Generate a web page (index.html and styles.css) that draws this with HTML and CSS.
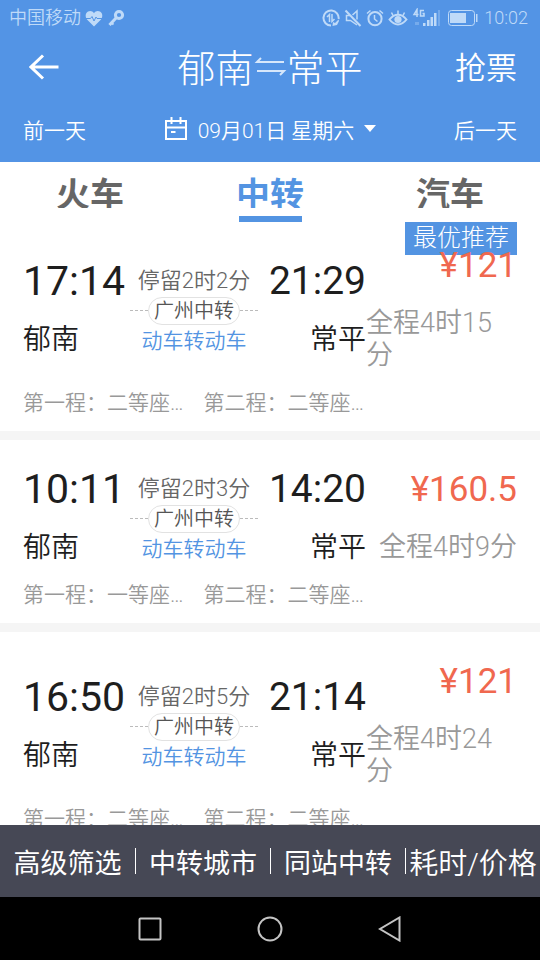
FILE: index.html
```html
<!DOCTYPE html>
<html lang="zh-CN">
<head>
<meta charset="utf-8">
<meta name="viewport" content="width=device-width, initial-scale=1">
<title>郁南 - 常平</title>
<link rel="stylesheet" href="styles.css">
</head>
<body>
<div class="app">
  <header class="header">
    <div class="status">
      <div class="status-group">
        <span>中国移动</span>
        <svg class="heart" width="18" height="17" viewBox="0 0 18 17"><path class="fill" d="M9 16.500 2 9.500C0 7 .3 3.200 3 1.600 5.300.4 7.800 1.300 9 3.300 10.200 1.300 12.700.4 15 1.600 17.700 3.200 18 7 16 9.500z"/><path class="cut" d="M1 8.500h4.500L7 6.500l2 4.500 2-4 1 1.500h5"/></svg>
        <svg class="key" width="18" height="18" viewBox="0 0 18 18"><circle class="ring" cx="12" cy="6" r="3.600"/><path class="ring" d="M9.500 8.500 2.500 16"/><path class="line" d="M4 13.500l2.500 2"/></svg>
      </div>
      <div class="status-group">
        <svg width="18" height="18" viewBox="0 0 18 18"><path class="line" d="M16.600 10A7.600 7.600 0 1 0 9 16.600"/><path class="mid" d="M7.500 13V5.500L5 8M10 5v7.500L12.500 10"/><path class="fill" d="M10.500 17 11 13l2 1 3.500-3.500.5 1.500-2 4z"/></svg>
        <svg width="18" height="18" viewBox="0 0 18 18"><path class="line" d="M1.500 1.500 16.500 17"/><path class="mid" d="M8.500 6 13 2v8.500M6 6.500H2.500v5h4L13 16"/></svg>
        <svg width="18" height="18" viewBox="0 0 18 18"><circle class="line" cx="9" cy="9.700" r="6.600"/><path class="mid" d="M8.500 6v4l3 2.500M1 4.500 4.500 1.500M17 4.500l-3.500-3"/></svg>
        <svg width="20" height="18" viewBox="0 0 20 18"><path class="line" d="M1.500 10.500c5-6.500 12-6.500 17 0-5 6.500-12 6.500-17 0z"/><path class="mid" d="M10 5V1.500M5 6.500 3.500 3.500M15 6.500l1.500-3"/><circle class="fill" cx="10" cy="10.500" r="3.600"/></svg>
        <svg class="signal" width="28" height="20" viewBox="0 0 28 20"><path class="mid" d="M5 9V1.500L2 6.500H6.500M12 2.500H8.500V8H12V5.500H10.500"/><path class="fill" d="M11 15h2.500v3H11zM15 12h2.500v6H15zM18.500 9H21v9h-2.500zM22 5h2.500v13H22z"/><path class="dim" d="M26 2h2v16h-2zM3 14h4v3H3z"/></svg>
        <svg class="battery" width="31" height="18" viewBox="0 0 31 18"><rect class="thin" x="1.500" y="1.500" width="26" height="15" rx="3"/><path class="fill" d="M3 4h16v10H3zM29 5h1.500v8H29z"/></svg>
        <span>10:02</span>
      </div>
    </div>
    <div class="titlebar">
      <button class="back" aria-label="返回"><svg width="30" height="26" viewBox="0 0 30 26"><path d="M14 1.500 2 13l12 11.500M2 13h27.500"/></svg></button>
      <h1 class="title"><span>郁南</span><svg width="33" height="20" viewBox="0 0 33 20"><path d="M7 1 3 5H30M3 14H30l-4 4"/></svg><span>常平</span></h1>
      <button class="grab">抢票</button>
    </div>
    <div class="datebar">
      <button class="day">前一天</button>
      <button class="date"><svg width="24" height="24" viewBox="0 0 24 24"><path d="M2 4h20v18H2zM2 10.500h20M7.500 0v7M16.500 0v7M7 15h4.500"/></svg><span>09月01日 星期六</span><i class="caret"></i></button>
      <button class="day next">后一天</button>
    </div>
  </header>
  <nav class="tabs">
    <a class="tab" href="#train"><span>火车</span></a>
    <a class="tab active" href="#transfer"><span>中转</span></a>
    <a class="tab" href="#bus"><span>汽车</span></a>
  </nav>
  <main class="list">
    <article class="card best">
      <span class="badge">最优推荐</span>
      <div class="trip">
        <div class="stop"><span class="time">17:14</span><span class="station">郁南</span></div>
        <div class="via"><span class="wait">停留2时2分</span><span class="hub"><span class="pill">广州中转</span></span><span class="kind">动车转动车</span></div>
        <div class="stop arrive"><span class="time">21:29</span><span class="station">常平</span></div>
        <div class="cost"><span class="price">¥121</span><span class="total">全程4时15分</span></div>
      </div>
      <div class="legs"><span>第一程：二等座…</span><span>第二程：二等座…</span></div>
    </article>
    <article class="card">
      <div class="trip">
        <div class="stop"><span class="time">10:11</span><span class="station">郁南</span></div>
        <div class="via"><span class="wait">停留2时3分</span><span class="hub"><span class="pill">广州中转</span></span><span class="kind">动车转动车</span></div>
        <div class="stop arrive"><span class="time">14:20</span><span class="station">常平</span></div>
        <div class="cost"><span class="price">¥160.5</span><span class="total">全程4时9分</span></div>
      </div>
      <div class="legs"><span>第一程：一等座…</span><span>第二程：二等座…</span></div>
    </article>
    <article class="card">
      <div class="trip">
        <div class="stop"><span class="time">16:50</span><span class="station">郁南</span></div>
        <div class="via"><span class="wait">停留2时5分</span><span class="hub"><span class="pill">广州中转</span></span><span class="kind">动车转动车</span></div>
        <div class="stop arrive"><span class="time">21:14</span><span class="station">常平</span></div>
        <div class="cost"><span class="price">¥121</span><span class="total">全程4时24分</span></div>
      </div>
      <div class="legs"><span>第一程：二等座…</span><span>第二程：二等座…</span></div>
    </article>
  </main>
  <footer class="filters">
    <button>高级筛选</button>
    <button>中转城市</button>
    <button>同站中转</button>
    <button class="sort">耗时/价格</button>
  </footer>
  <div class="sysnav">
    <button aria-label="最近任务"><svg width="26" height="26" viewBox="0 0 26 26"><rect x="2.500" y="2.500" width="21" height="21" rx="1"/></svg></button>
    <button aria-label="主页"><svg width="26" height="26" viewBox="0 0 26 26"><circle cx="13" cy="13" r="11.500"/></svg></button>
    <button aria-label="后退"><svg width="26" height="26" viewBox="0 0 26 26"><path d="M22.500 1.500v23L3 13z"/></svg></button>
  </div>
</div>
</body>
</html>
```
FILE: styles.css
```css
* {
  box-sizing: border-box;
}

body {
  margin: 0;
  font-family: Roboto, "Noto Sans CJK SC", sans-serif;
  font-weight: 350;
  color: #1e1e1e;
  background: #fff;
}

button {
  margin: 0;
  padding: 0;
  border: 0;
  background: none;
  color: inherit;
  font: inherit;
  white-space: nowrap;
}

svg {
  display: block;
  flex: none;
  fill: none;
}

.app {
  display: flex;
  flex-direction: column;
  height: 100vh;
}

/* Header */
.header {
  flex: none;
  color: #fff;
  background: #5394e5;
}

.status {
  display: flex;
  justify-content: space-between;
  padding: 0 12px 0 9px;
  line-height: 36px;
  font-size: 18px;
  color: #bfdaf8;
}

.status-group {
  display: flex;
  align-items: center;
  gap: 4px;
}

.status .line {
  stroke: currentColor;
  stroke-width: 2;
}

.status .mid {
  stroke: currentColor;
  stroke-width: 1.5;
}

.status .thin {
  stroke: currentColor;
  stroke-width: 1;
}

.status .ring {
  stroke: currentColor;
  stroke-width: 3;
}

.status .fill {
  fill: currentColor;
}

.status .cut {
  stroke: #5394e5;
  stroke-width: 1;
}

.status .dim {
  fill: #76abec;
}

.battery {
  margin: 0 2px 0 3px;
}

.titlebar,
.datebar {
  display: grid;
  grid-template-columns: 1fr auto 1fr;
  align-items: center;
  padding: 0 23px;
}

.titlebar {
  height: 62px;
}

.back {
  justify-self: start;
  padding-left: 6px;
}

.back svg {
  stroke: #fff;
  stroke-width: 3;
}

.title {
  display: flex;
  align-items: center;
  margin: 0;
  font-size: 38px;
  font-weight: 300;
}

.title span,
.grab {
  padding-bottom: 4px;
}

.title svg {
  stroke: #d6e7fb;
  stroke-width: 2;
}

.grab {
  justify-self: end;
  font-size: 31px;
}

.datebar {
  height: 64px;
  padding-bottom: 3px;
  font-size: 21px;
}

.day {
  justify-self: start;
}

.next {
  justify-self: end;
}

.date {
  display: flex;
  align-items: center;
  gap: 10px;
}

.date svg {
  stroke: #fff;
  stroke-width: 2;
}

.caret {
  border: 6px solid transparent;
  border-top: 7px solid #fff;
  border-bottom: 0;
}

/* Tabs */
.tabs {
  display: grid;
  grid-template-columns: repeat(3, 1fr);
  flex: none;
  height: 60px;
}

.tab {
  display: flex;
  flex-direction: column;
  align-items: center;
  gap: 8px;
  color: #666;
  font-size: 34px;
  font-weight: 700;
  text-decoration: none;
}

.tab span {
  height: 46px;
  line-height: 66px;
  overflow: hidden;
}

.active {
  color: #5394e2;
}

.active::after {
  content: "";
  width: 63px;
  height: 6px;
  background: #5394e2;
}

/* Results */
.list {
  flex: 1;
  min-height: 0;
  overflow: hidden;
}

.card {
  position: relative;
  padding: 34px 23px 12px;
  border-bottom: 9px solid #f5f5f5;
  box-sizing: content-box;
}

.best {
  padding-top: 28px;
}

.badge {
  position: absolute;
  top: 0;
  right: 23px;
  padding: 0 8px;
  line-height: 33px;
  font-size: 24px;
  font-weight: 300;
  color: #fff;
  background: #5394e2;
}

.trip {
  position: relative;
  display: grid;
  grid-template-columns: 107px 128px 108px 1fr;
  align-items: center;
}

.stop {
  display: flex;
  flex-direction: column;
  gap: 29px;
  line-height: 30px;
  font-size: 28px;
}

.time {
  font-size: 41px;
  font-weight: 400;
}

.arrive {
  align-items: flex-end;
}

.arrive .time {
  font-size: 39px;
}

.via {
  display: flex;
  flex-direction: column;
  align-items: center;
  gap: 2px;
  line-height: 28px;
  font-size: 21px;
  color: #666;
}

.wait {
  font-size: 22px;
}

.hub {
  display: flex;
  align-items: center;
  align-self: stretch;
}

.hub::before,
.hub::after {
  content: "";
  flex: 1;
  border-top: 1px dashed #bbb;
}

.pill {
  padding: 0 5px;
  border: 1px solid #e2e2e2;
  border-radius: 14px;
  line-height: 26px;
  font-size: 20px;
  color: #555;
}

.kind {
  color: #5394e2;
}

.cost {
  display: flex;
  flex-direction: column;
  align-items: flex-end;
  gap: 25px;
  line-height: 32px;
}

.price {
  font-size: 35px;
  font-weight: 400;
  color: #f0684f;
}

.total {
  font-size: 27px;
  color: #999;
}

.legs {
  display: flex;
  gap: 20px;
  margin-top: 16px;
  line-height: 32px;
  font-size: 21px;
  color: #999;
}

/* Bottom bars */
.filters {
  display: grid;
  grid-template-columns: repeat(4, 1fr);
  flex: none;
  align-items: center;
  height: 72px;
  color: #fff;
  background: #464855;
}

.filters button {
  height: 26px;
  padding-top: 3px;
  line-height: 26px;
  font-size: 27px;
  font-weight: 400;
}

.filters button + button {
  border-left: 1px solid #fff;
}

.filters .sort {
  font-size: 29px;
  font-weight: 350;
}

.sysnav {
  display: flex;
  justify-content: center;
  align-items: center;
  gap: 94px;
  flex: none;
  height: 63px;
  background: #000;
}

.sysnav svg {
  stroke: #c4c4c4;
  stroke-width: 2;
}
```
